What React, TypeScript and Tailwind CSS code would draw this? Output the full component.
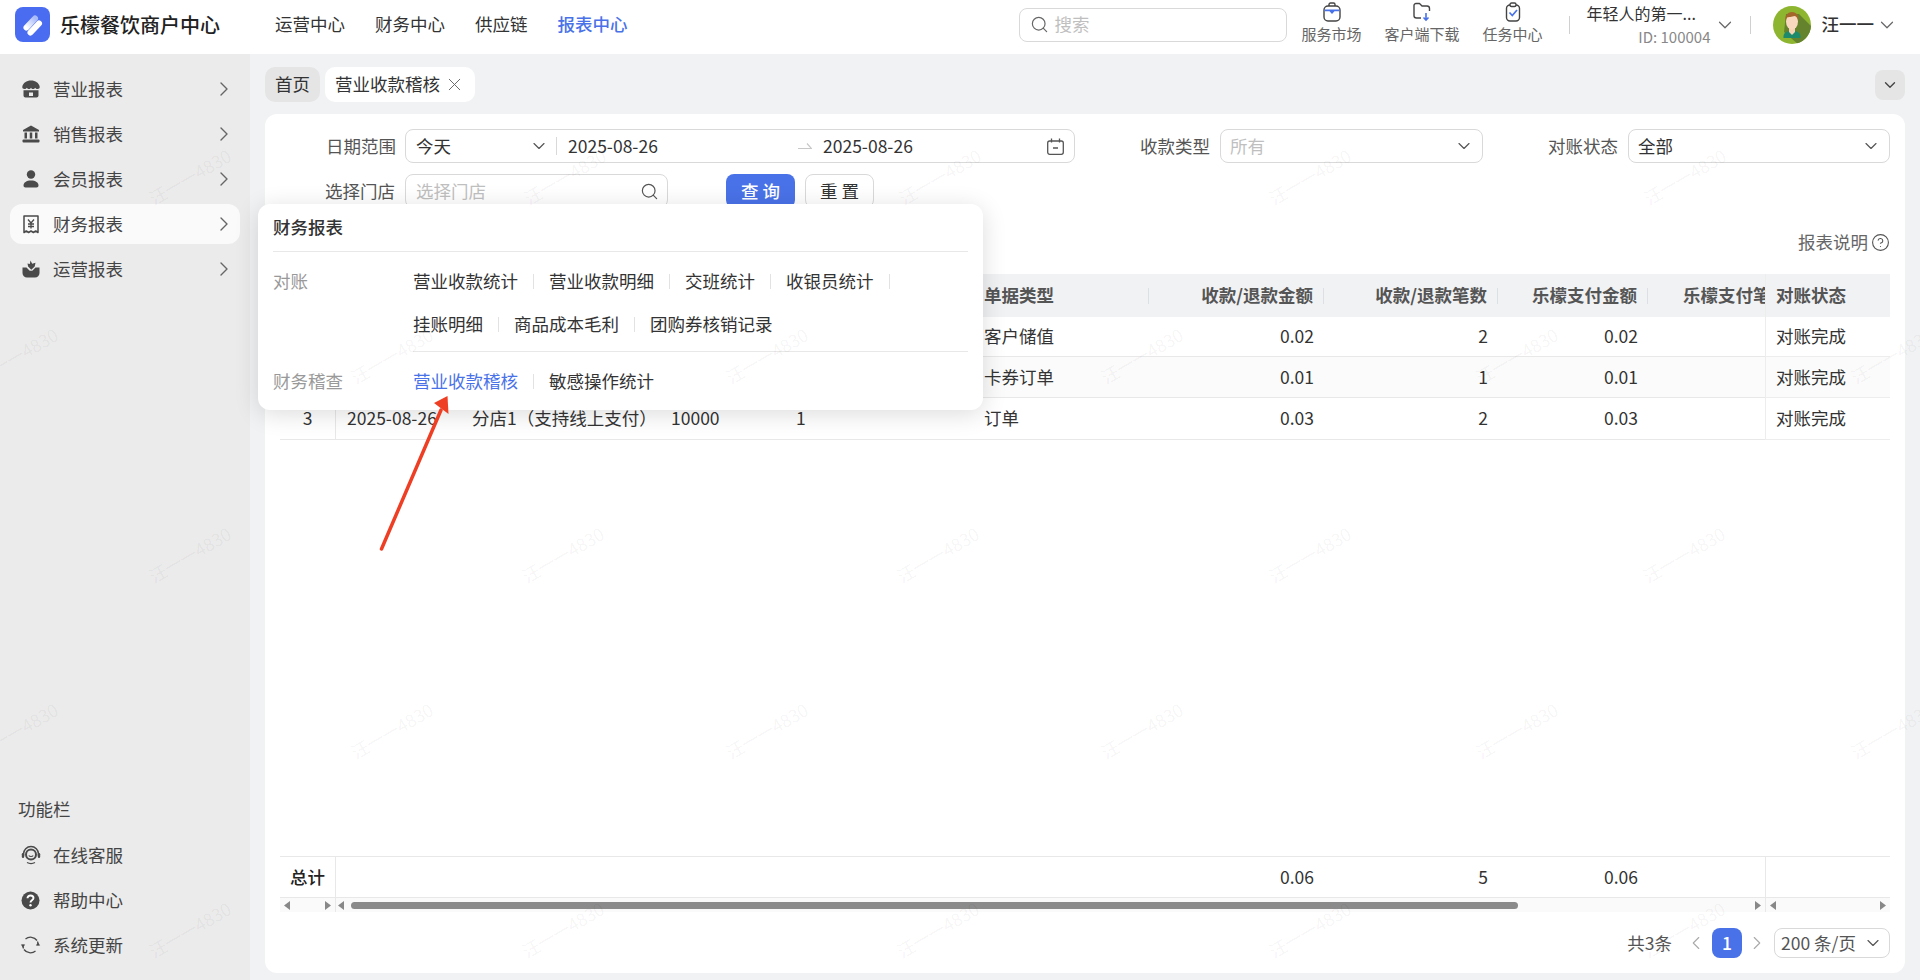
import { ChevronDown, ChevronLeft, ChevronRight, CircleHelp, Search, X } from "lucide-react"

const sideItems = [
  { label: "营业报表", icon: <StoreIcon /> },
  { label: "销售报表", icon: <BankIcon /> },
  { label: "会员报表", icon: <UserIcon /> },
  { label: "财务报表", icon: <ReceiptIcon />, active: true },
  { label: "运营报表", icon: <BoxIcon /> },
]

const toolItems = [
  { label: "在线客服", icon: <HeadsetIcon /> },
  { label: "帮助中心", icon: <HelpIcon /> },
  { label: "系统更新", icon: <RefreshIcon /> },
]

const gridCols = "grid grid-cols-[125px_199px_125px_188px_176px_175px_174px_150px_151px]"

const rows = [
  { type: "客户储值", amount: "0.02", count: "2", pay: "0.02", bg: "", h: "h-[40px]" },
  { type: "卡券订单", amount: "0.01", count: "1", pay: "0.01", bg: "bg-[#fafbfa]", h: "h-[41px]" },
  { type: "订单", amount: "0.03", count: "2", pay: "0.03", bg: "", h: "h-[42px]" },
]

const watermarks = [
  [190, 177], [565, 177], [940, 177], [1310, 177], [1685, 177],
  [17, 356], [392, 356], [767, 356], [1142, 356], [1517, 356], [1892, 356],
  [190, 555], [563, 555], [938, 555], [1310, 555], [1684, 555],
  [17, 731], [392, 731], [767, 731], [1142, 731], [1517, 731], [1892, 731],
  [190, 930], [563, 930], [938, 930], [1310, 930], [1684, 930],
]

function LogoIcon() {
  return (
    <svg width="35" height="35" viewBox="0 0 35 35" fill="none" strokeLinecap="round">
      <defs>
        <linearGradient id="logo-top" x1="0" y1="1" x2="1" y2="0">
          <stop offset="0" stopColor="#ffffff" />
          <stop offset="1" stopColor="#a9bcfa" />
        </linearGradient>
      </defs>
      <rect width="35" height="35" rx="8" fill="#4a6cf0" />
      <path d="M11.500 20.500 20 11.500" stroke="url(#logo-top)" strokeWidth="6" />
      <path d="M15.500 25.500 24 16.500" stroke="#ffffff" strokeWidth="6" />
    </svg>
  )
}

function StoreIcon() {
  return (
    <svg width="18" height="18" viewBox="0 0 18 18" fill="#4a4a4a">
      <path d="M9 0.500c4.500 0 8 2.500 8.700 6.200.2 1.300-.9 2.300-2.200 2.300-1 0-1.900-.5-2.300-1.300-.5.8-1.300 1.300-2.200 1.300S9.400 8.500 9 7.700c-.4.8-1.200 1.300-2 1.300s-1.700-.5-2.200-1.300C4.400 8.500 3.500 9 2.500 9 1.200 9 .1 8 .3 6.700 1 3 4.500.5 9 .5Z" />
      <path d="M1.500 10.300h15v5.200c0 1.100-.9 2-2 2h-11c-1.100 0-2-.9-2-2v-5.200Zm5.500 2.200v3.500h4v-3.500H7Z" fillRule="evenodd" />
    </svg>
  )
}

function BankIcon() {
  return (
    <svg width="18" height="18" viewBox="0 0 18 18" fill="#4a4a4a">
      <path d="M9 0.500 17 5v1.500H1V5l8-4.500Z" />
      <rect x="2.500" y="7.500" width="2.500" height="6" />
      <rect x="7.750" y="7.500" width="2.500" height="6" />
      <rect x="13" y="7.500" width="2.500" height="6" />
      <rect x="0.500" y="14.500" width="17" height="3" rx="1" />
    </svg>
  )
}

function UserIcon() {
  return (
    <svg width="18" height="18" viewBox="0 0 18 18" fill="#4a4a4a">
      <circle cx="9" cy="4.500" r="4.200" />
      <path d="M1.500 15.500c0-3 3-5 7.500-5s7.500 2 7.500 5c0 1.300-.8 2-2 2h-11c-1.200 0-2-.7-2-2Z" />
    </svg>
  )
}

function ReceiptIcon() {
  return (
    <svg width="18" height="19" viewBox="0 0 18 19" fill="none" stroke="#4a4a4a" strokeWidth="1.500">
      <path d="M2 1h14v16.500l-2.300-1.500-2.300 1.500L9 16l-2.400 1.500L4.300 16 2 17.500V1Z" strokeLinejoin="round" />
      <path d="M6 4.500 9 8l3-3.500M9 8v5.500M6 9h6M6 11.500h6" strokeWidth="1.300" />
    </svg>
  )
}

function BoxIcon() {
  return (
    <svg width="18" height="18" viewBox="0 0 18 18" fill="#4a4a4a">
      <path d="M0.500 7.500h4l3.200 3.200h2.600l3.200-3.200h4V13a4.500 4.500 0 0 1-4.500 4.500H5A4.500 4.500 0 0 1 .5 13V7.500Z" />
      <path d="M8.500 0.500l1.700 3.300 3.300-1-.8 3.700-3.400 3.300-3.200-3.200-.6-3 2.300.5Z" />
    </svg>
  )
}

function HeadsetIcon() {
  return (
    <svg width="20" height="20" viewBox="0 0 20 20" fill="none" stroke="#4a4a4a">
      <path d="M2.500 11V9a7.500 7.500 0 0 1 15 0v2" strokeWidth="1.500" />
      <rect x="0.800" y="8" width="2.400" height="5" rx="1.200" fill="#4a4a4a" stroke="none" />
      <rect x="16.800" y="8" width="2.400" height="5" rx="1.200" fill="#4a4a4a" stroke="none" />
      <circle cx="10" cy="9.500" r="5" strokeWidth="2" />
      <path d="M7.800 10.500c.8 1.300 3.600 1.300 4.400 0" strokeWidth="1.200" />
      <path d="M6 17.500c2.500 1.300 5.500 1.300 8 0" strokeWidth="1.300" />
    </svg>
  )
}

function HelpIcon() {
  return (
    <svg width="19" height="19" viewBox="0 0 19 19">
      <circle cx="9.500" cy="9.500" r="9" fill="#4a4a4a" />
      <path d="M6.500 7.300c0-1.700 1.300-2.800 3-2.800s3 1.100 3 2.600c0 2.200-3 2.300-3 4.400" fill="none" stroke="#fff" strokeWidth="1.900" />
      <circle cx="9.500" cy="14.300" r="1.200" fill="#fff" />
    </svg>
  )
}

function RefreshIcon() {
  return (
    <svg width="21" height="20" viewBox="0 0 21 20" fill="none" stroke="#4a4a4a" strokeWidth="1.300">
      <path d="M5.500 4a8 8 0 0 1 11.500 1.500" />
      <path d="M15.500 16a8 8 0 0 1-11.500-1.500" />
      <path d="M3 9.500a8 8 0 0 0 .5 4" />
      <path d="M18 10.500a8 8 0 0 0-.5-4" />
      <path d="M0.800 9.500h4.400L3 12.500Z" fill="#4a4a4a" stroke="none" />
      <path d="M15.800 10.500h4.400L18 7.500Z" fill="#4a4a4a" stroke="none" />
    </svg>
  )
}

function BagIcon() {
  return (
    <svg width="20" height="20" viewBox="0 0 20 20" fill="none">
      <path d="M7 4V2.500C7 1.700 7.700 1 8.500 1h3c.8 0 1.500.7 1.500 1.500V4" stroke="#444" strokeWidth="1.400" />
      <rect x="2" y="4" width="16" height="15" rx="4" stroke="#444" strokeWidth="1.400" />
      <path d="M2.700 7.500h14.600v1.800h-4.800L10 12 7.500 9.300H2.700Z" fill="#4a72e8" />
    </svg>
  )
}

function FolderIcon() {
  return (
    <svg width="20" height="20" viewBox="0 0 20 20" fill="none">
      <path d="M9 16H4.500C3 16 2 15 2 13.500v-10C2 2.500 2.800 1.500 4 1.500h3.500L10 4h5c1.500 0 2.500 1 2.500 2.500V9" stroke="#444" strokeWidth="1.400" strokeLinejoin="round" />
      <path d="M14 11v6.500M11.500 15.500 14 18l2.500-2.500" stroke="#4a72e8" strokeWidth="1.600" />
    </svg>
  )
}

function ClipboardIcon() {
  return (
    <svg width="20" height="20" viewBox="0 0 20 20" fill="none">
      <rect x="3.500" y="3" width="13" height="16" rx="3.500" stroke="#444" strokeWidth="1.400" />
      <rect x="7" y="1" width="6" height="3.500" rx="1.500" fill="#fff" stroke="#444" strokeWidth="1.400" />
      <path d="M6.500 10.500 9.300 13.500 14 8" stroke="#4a72e8" strokeWidth="1.700" />
    </svg>
  )
}

function CalendarIcon() {
  return (
    <svg width="17" height="17" viewBox="0 0 17 17" fill="none" stroke="#555" strokeWidth="1.300">
      <rect x="0.700" y="3" width="15.600" height="13.300" rx="2" />
      <path d="M4.500 0.500V4.500M12.500 0.500V4.500" />
      <path d="M6 10h5" strokeWidth="1.500" />
    </svg>
  )
}

function AvatarIcon() {
  return (
    <svg width="38" height="38" viewBox="0 0 38 38">
      <circle cx="19" cy="19" r="19" fill="#8db52f" />
      <path d="M13 8 26 8 38 20A19 19 0 0 1 24 37.300L11 26Z" fill="#64832c" />
      <path d="M10.500 30.500c0-3 2.500-5 5.500-5.500h6c3 .5 5.500 2.500 5.500 5.500v1.500h-17Z" fill="#1d8a6b" />
      <path d="M16 22h6v4l-3 3-3-3Z" fill="#f6d2b4" />
      <ellipse cx="19" cy="15.500" rx="6" ry="8" fill="#f8d8bf" />
      <path d="M12.500 15c-.8-5 2-9 6.500-9s7.200 3.500 6.500 9c-.7-2.700-2-4.500-4-5-2.500 1-6.500 1-7.200 1.500-1 .8-1.500 2-1.800 3.500Z" fill="#a5662b" />
    </svg>
  )
}

function Triangle({ dir }: { dir: "left" | "right" }) {
  return (
    <svg width="6" height="9" viewBox="0 0 6 9" fill="#888">
      {dir === "left" ? <path d="M6 0v9L0 4.500Z" /> : <path d="M0 0v9l6-4.500Z" />}
    </svg>
  )
}

function HeaderTool({ label, width, children }: { label: string; width: string; children: React.ReactNode }) {
  return (
    <div className={`flex flex-col items-center ${width}`}>
      <div className="h-[22px] flex items-center">{children}</div>
      <span className="text-[15px] leading-[22px] text-[#666] whitespace-nowrap">{label}</span>
    </div>
  )
}

function SideRow({ label, icon, active }: { label: string; icon: React.ReactNode; active?: boolean }) {
  return (
    <div className={`mx-[10px] mb-[5px] h-10 flex items-center pl-3 pr-[4px] rounded-[12px] ${active ? "bg-[#fafafa]" : ""}`}>
      <div className="w-[18px] flex justify-center shrink-0">{icon}</div>
      <span className="ml-[13px] flex-1 text-[17.5px] text-[#444]">{label}</span>
      <ChevronRight size={24} strokeWidth={1.4} className="text-[#666]" />
    </div>
  )
}

function SelectBox({ width, text, placeholder }: { width: string; text: string; placeholder?: boolean }) {
  return (
    <div className={`${width} h-[34px] flex items-center justify-between pl-[9px] pr-[8px] border border-[#d9d9d9] rounded-[8px]`}>
      <span className={`text-[17.5px] ${placeholder ? "text-[#bfbfbf]" : "text-[#333]"}`}>{text}</span>
      <ChevronDown size={20} strokeWidth={1.4} className="text-[#555]" />
    </div>
  )
}

function PopupLink({ label, sep = true, active }: { label: string; sep?: boolean; active?: boolean }) {
  return (
    <div className="flex items-center h-[26px]">
      <span className={`text-[17.5px] ${active ? "text-[#4a72e8]" : "text-[#333]"}`}>{label}</span>
      {sep && <span className="mx-[15px] w-px h-[15px] bg-[#e2e2e2]" />}
    </div>
  )
}

function HeadCell({ label, right }: { label?: string; right?: boolean }) {
  return (
    <div className={`flex items-center h-full ${right ? "justify-end" : "justify-between pl-[11px]"}`}>
      <span className="text-[17.5px] font-bold text-[#555] whitespace-nowrap">{label}</span>
      <span className="ml-[10px] w-px h-[16px] bg-[#dcdfe3] shrink-0" />
    </div>
  )
}

export default function App() {
  return (
    <div className="relative h-screen w-full overflow-hidden flex flex-col bg-[#f1f2f4] font-['Noto_Sans_CJK_SC','Noto_Sans',sans-serif]">
      <header className="h-[54px] shrink-0 bg-white flex items-center pl-[15px] pb-[5px]">
        <LogoIcon />
        <span className="ml-[10px] text-[20px] font-medium text-[#222] whitespace-nowrap">乐檬餐饮商户中心</span>
        <nav className="ml-[55px] flex items-center gap-[30px] text-[17.5px] text-[#333]">
          <span>运营中心</span>
          <span>财务中心</span>
          <span>供应链</span>
          <span className="text-[#4a72e8] font-medium">报表中心</span>
        </nav>
        <div className="ml-auto flex items-center">
          <div className="w-[268px] h-[34px] flex items-center pl-[10px] border border-[#d9d9d9] rounded-[8px]">
            <Search size={19} strokeWidth={1.5} className="text-[#666]" />
            <span className="ml-[6px] text-[17.5px] text-[#bfbfbf]">搜索</span>
          </div>
          <div className="ml-[15px] mb-[3px] flex items-center gap-[23px]">
            <HeaderTool label="服务市场" width="w-[60px]"><BagIcon /></HeaderTool>
            <HeaderTool label="客户端下载" width="w-[75px]"><FolderIcon /></HeaderTool>
            <HeaderTool label="任务中心" width="w-[60px]"><ClipboardIcon /></HeaderTool>
          </div>
          <span className="ml-[26px] w-px h-[18px] bg-[#d0d0d0]" />
          <div className="ml-[17px] w-[124px] flex flex-col">
            <span className="text-[16px] leading-[24px] text-[#333] whitespace-nowrap">年轻人的第一...</span>
            <span className="text-[15px] leading-[24px] text-[#888] text-right whitespace-nowrap">ID: 100004</span>
          </div>
          <ChevronDown size={22} strokeWidth={1.3} className="ml-[3px] text-[#666]" />
          <span className="ml-[14px] w-px h-[18px] bg-[#d0d0d0]" />
          <div className="ml-[22px] shrink-0"><AvatarIcon /></div>
          <span className="ml-[11px] text-[17.5px] font-medium text-[#333] whitespace-nowrap">汪一一</span>
          <ChevronDown size={22} strokeWidth={1.3} className="ml-[2px] mr-[22px] text-[#666]" />
        </div>
      </header>

      <div className="flex-1 min-h-0 flex">
        <aside className="w-[250px] shrink-0 bg-[#ebebeb] flex flex-col justify-between pt-[15px] pb-[10px]">
          <div>
            {sideItems.map((item) => (
              <SideRow key={item.label} label={item.label} icon={item.icon} active={item.active} />
            ))}
          </div>
          <div>
            <div className="pl-[18px] mb-[13px] text-[17.5px] leading-[26px] text-[#444]">功能栏</div>
            {toolItems.map((item) => (
              <div key={item.label} className="mx-[10px] mb-[5px] h-10 flex items-center pl-[10px]">
                <div className="w-[21px] flex justify-center shrink-0">{item.icon}</div>
                <span className="ml-[12px] text-[17.5px] text-[#444]">{item.label}</span>
              </div>
            ))}
          </div>
        </aside>

        <main className="flex-1 min-w-0 flex flex-col px-[15px] pt-[13px] pb-[7px]">
          <div className="h-[35px] shrink-0 flex items-center gap-[5px]">
            <div className="w-[55px] h-[35px] flex items-center justify-center rounded-[10px] bg-[#e5e5e5] text-[17.5px] text-[#333]">首页</div>
            <div className="w-[150px] h-[35px] flex items-center pl-[10px] rounded-[10px] bg-white text-[17.5px] text-[#333]">
              <span>营业收款稽核</span>
              <X size={21} strokeWidth={1.1} className="ml-[4px] text-[#666]" />
            </div>
            <div className="ml-auto w-[30px] h-[30px] flex items-center justify-center rounded-[8px] bg-[#e5e5e5]">
              <ChevronDown size={18} strokeWidth={1.8} className="text-[#444]" />
            </div>
          </div>

          <div className="mt-[12px] flex-1 min-h-0 flex flex-col bg-white rounded-[12px] px-[15px] pt-[15px] pb-[15px]">
            <div className="h-[34px] shrink-0 flex items-center">
              <span className="w-[116px] text-right text-[17.5px] text-[#555]">日期范围</span>
              <div className="ml-[9px] w-[670px] h-[34px] flex items-center border border-[#d9d9d9] rounded-[8px]">
                <span className="ml-[10px] w-[113px] text-[17.500px] text-[#333]">今天</span>
                <ChevronDown size={20} strokeWidth={1.4} className="text-[#555]" />
                <span className="ml-[7px] w-px h-[18px] bg-[#d9d9d9]" />
                <span className="ml-[11px] w-[230px] text-[17.5px] text-[#333]">2025-08-26</span>
                <svg width="14" height="10" viewBox="0 0 14 10" fill="none" stroke="#c8c8c8" strokeWidth="1.200">
                  <path d="M0 7.500h13.500L9 2.500" />
                </svg>
                <span className="ml-[11px] text-[17.5px] text-[#333]">2025-08-26</span>
                <div className="ml-auto mr-[10px]"><CalendarIcon /></div>
              </div>
              <span className="ml-[65px] text-[17.5px] text-[#555]">收款类型</span>
              <div className="ml-[10px]"><SelectBox width="w-[263px]" text="所有" placeholder /></div>
              <span className="ml-[65px] text-[17.5px] text-[#555]">对账状态</span>
              <div className="ml-[10px]"><SelectBox width="w-[262px]" text="全部" /></div>
            </div>

            <div className="mt-[11px] h-[34px] shrink-0 flex items-center">
              <span className="w-[115px] text-right text-[17.5px] text-[#555]">选择门店</span>
              <div className="ml-[10px] w-[263px] h-[34px] flex items-center justify-between pl-[10px] pr-[8px] border border-[#d9d9d9] rounded-[8px]">
                <span className="text-[17.5px] text-[#bfbfbf]">选择门店</span>
                <Search size={19} strokeWidth={1.5} className="text-[#555]" />
              </div>
              <div className="ml-[58px] w-[69px] h-[34px] flex items-center justify-center rounded-[8px] bg-[#4a72e8] text-[17.5px] font-medium text-white">查 询</div>
              <div className="ml-[10px] w-[69px] h-[34px] flex items-center justify-center rounded-[8px] border border-[#d9d9d9] text-[17.5px] text-[#333]">重 置</div>
            </div>

            <div className="mt-[21px] h-[26px] shrink-0 flex items-center justify-end gap-[3px] text-[17.5px] text-[#666]">
              <span>报表说明</span>
              <CircleHelp size={19} strokeWidth={1.4} className="text-[#555]" />
            </div>

            <div className="mt-[19px] flex-1 min-h-0 flex">
              <div className="w-[56px] shrink-0 flex flex-col">
                <div className="h-[43px] bg-[#f1f2f4] border-r border-[#e8e8e8]" />
                {rows.map((row, i) => (
                  <div key={row.type} className={`${row.h} flex items-center justify-center border-b border-r border-[#e8e8e8] text-[17.5px] text-[#333] ${row.bg}`}>
                    {i === 2 ? "3" : ""}
                  </div>
                ))}
                <div className="flex-1" />
                <div className="h-[42px] flex items-center justify-center border-y border-r border-[#e8e8e8] text-[17.5px] font-medium text-[#222]">总计</div>
                <div className="h-[14px] flex items-center justify-between px-[4px] border-r border-[#e8e8e8] bg-[#fafafa]">
                  <Triangle dir="left" />
                  <Triangle dir="right" />
                </div>
              </div>

              <div className="flex-1 min-w-0 overflow-hidden flex flex-col">
                <div className={`${gridCols} h-[43px] shrink-0 bg-[#f1f2f4]`}>
                  <HeadCell />
                  <HeadCell />
                  <HeadCell />
                  <HeadCell />
                  <HeadCell label="单据类型" />
                  <HeadCell label="收款/退款金额" right />
                  <HeadCell label="收款/退款笔数" right />
                  <HeadCell label="乐檬支付金额" right />
                  <HeadCell label="乐檬支付笔数" right />
                </div>
                {rows.map((row, i) => (
                  <div key={row.type} className={`${gridCols} ${row.h} shrink-0 items-center border-b border-[#e8e8e8] text-[17.5px] text-[#333] ${row.bg}`}>
                    <span className="pl-[11px]">{i === 2 ? "2025-08-26" : ""}</span>
                    <span className="pl-[11px] whitespace-nowrap">{i === 2 ? "分店1（支持线上支付）" : ""}</span>
                    <span className="pl-[11px]">{i === 2 ? "10000" : ""}</span>
                    <span className="pl-[11px]">{i === 2 ? "1" : ""}</span>
                    <span className="pl-[11px]">{row.type}</span>
                    <span className="pr-[10px] text-right">{row.amount}</span>
                    <span className="pr-[10px] text-right">{row.count}</span>
                    <span className="pr-[10px] text-right">{row.pay}</span>
                    <span />
                  </div>
                ))}
                <div className="flex-1" />
                <div className={`${gridCols} h-[42px] shrink-0 items-center border-y border-[#e8e8e8] text-[17.5px] text-[#333]`}>
                  <span />
                  <span />
                  <span />
                  <span />
                  <span />
                  <span className="pr-[10px] text-right">0.06</span>
                  <span className="pr-[10px] text-right">5</span>
                  <span className="pr-[10px] text-right">0.06</span>
                  <span />
                </div>
                <div className="h-[14px] shrink-0 flex items-center pl-[2px] pr-[4px] bg-[#fafafa]">
                  <Triangle dir="left" />
                  <div className="ml-[7px] w-[1167px] h-[7px] rounded-full bg-[#8b8b8b]" />
                  <div className="ml-auto"><Triangle dir="right" /></div>
                </div>
              </div>

              <div className="w-[125px] shrink-0 flex flex-col">
                <div className="h-[43px] flex items-center pl-[10px] bg-[#f1f2f4] border-l border-[#ededed] text-[17.5px] font-bold text-[#555]">对账状态</div>
                {rows.map((row) => (
                  <div key={row.type} className={`${row.h} flex items-center pl-[10px] border-b border-l border-[#ededed] text-[17.5px] text-[#333] ${row.bg}`}>对账完成</div>
                ))}
                <div className="flex-1" />
                <div className="h-[42px] border-y border-l border-[#e8e8e8]" />
                <div className="h-[14px] flex items-center justify-between px-[4px] border-l border-[#e8e8e8] bg-[#fafafa]">
                  <Triangle dir="left" />
                  <Triangle dir="right" />
                </div>
              </div>
            </div>

            <div className="mt-[16px] h-[30px] shrink-0 flex items-center justify-end text-[17.5px] text-[#555]">
              <span>共3条</span>
              <ChevronLeft size={22} strokeWidth={1.2} className="ml-[13px] text-[#aaa]" />
              <div className="ml-[5px] w-[30px] h-[30px] flex items-center justify-center rounded-[8px] bg-[#4a72e8] font-medium text-white">1</div>
              <ChevronRight size={22} strokeWidth={1.2} className="ml-[4px] text-[#aaa]" />
              <div className="ml-[6px] w-[116px] h-[30px] flex items-center justify-between pl-[6px] pr-[6px] border border-[#d9d9d9] rounded-[8px]">
                <span className="whitespace-nowrap">200 条/页</span>
                <ChevronDown size={20} strokeWidth={1.4} className="text-[#555]" />
              </div>
            </div>
          </div>
        </main>
      </div>

      <div className="absolute left-[258px] top-[204px] w-[725px] h-[206px] px-[15px] bg-white rounded-[12px] shadow-[0_4px_24px_rgba(0,0,0,0.14)]">
        <div className="h-[48px] flex items-center border-b border-[#e8e8e8] text-[17.5px] font-medium text-[#333]">财务报表</div>
        <div className="flex">
          <div className="w-[140px] pt-[16px] text-[17.5px] leading-[26px] text-[#999]">对账</div>
          <div className="flex-1 flex flex-wrap gap-y-[17px] pt-[16px] pb-[14px] border-b border-[#e8e8e8]">
            <PopupLink label="营业收款统计" />
            <PopupLink label="营业收款明细" />
            <PopupLink label="交班统计" />
            <PopupLink label="收银员统计" />
            <PopupLink label="挂账明细" />
            <PopupLink label="商品成本毛利" />
            <PopupLink label="团购券核销记录" sep={false} />
          </div>
        </div>
        <div className="flex pt-[16px]">
          <div className="w-[140px] text-[17.5px] leading-[26px] text-[#999]">财务稽查</div>
          <div className="flex-1 flex">
            <PopupLink label="营业收款稽核" active />
            <PopupLink label="敏感操作统计" sep={false} />
          </div>
        </div>
      </div>

      <svg className="absolute left-[375px] top-[390px] pointer-events-none" width="80" height="165" viewBox="0 0 80 165" fill="none">
        <path d="M6.500 159 66 20" stroke="#ee3f24" strokeWidth="3.500" strokeLinecap="round" />
        <path d="M72.500 6 59 13 73.500 24Z" fill="#ee3f24" />
      </svg>

      <div className="absolute inset-0 overflow-hidden pointer-events-none">
        {watermarks.map(([x, y]) => (
          <span
            key={`${x}-${y}`}
            className="absolute -translate-x-1/2 -translate-y-1/2 -rotate-[30deg] text-[17.5px] whitespace-nowrap text-black/[0.05]"
            style={{ left: x, top: y }}
          >
            汪一一4830
          </span>
        ))}
      </div>
    </div>
  )
}
